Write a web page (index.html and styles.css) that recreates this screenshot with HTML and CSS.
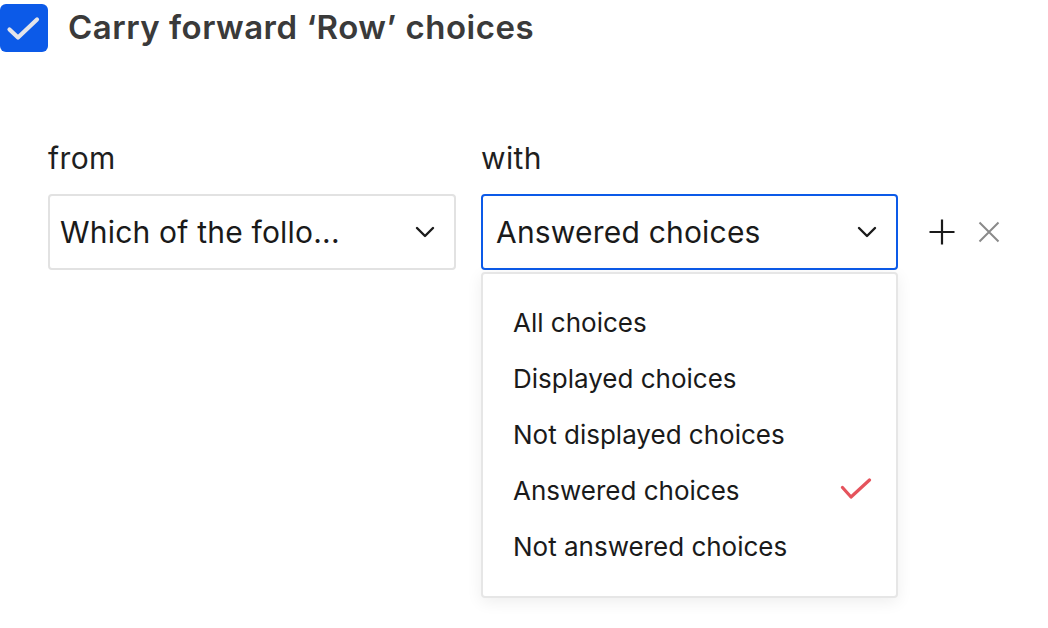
FILE: index.html
```html
<!DOCTYPE html>
<html>
<head>
<meta charset="utf-8">
<link rel="stylesheet" href="styles.css">
</head>
<body>
<div class="page">
  <div class="header">
    <span class="checkbox">
      <svg width="48" height="48" viewBox="0 0 48 48"><path d="M9.5 25.5 L18 33.5 L37 15.5" fill="none" stroke="#e4e4ea" stroke-width="4.2" stroke-linecap="round" stroke-linejoin="round"/></svg>
    </span>
    <span class="title">Carry forward ‘Row’ choices</span>
  </div>
  <div class="fields">
    <div class="col col-from">
      <div class="label">from</div>
      <div class="select">
        <span class="value">Which of the follo...</span>
        <svg class="chev" width="20" height="12" viewBox="0 0 20 12"><path d="M2 2 L10 10 L18 2" fill="none" stroke="#1a1a1a" stroke-width="2.4" stroke-linecap="round" stroke-linejoin="round"/></svg>
      </div>
    </div>
    <div class="col col-with">
      <div class="label">with</div>
      <div class="select active">
        <span class="value">Answered choices</span>
        <svg class="chev" width="20" height="12" viewBox="0 0 20 12"><path d="M2 2 L10 10 L18 2" fill="none" stroke="#1a1a1a" stroke-width="2.4" stroke-linecap="round" stroke-linejoin="round"/></svg>
      </div>
      <ul class="menu">
        <li>All choices</li>
        <li>Displayed choices</li>
        <li>Not displayed choices</li>
        <li class="selected">Answered choices
          <svg class="tick" width="32" height="24" viewBox="0 0 32 24"><path d="M2.5 9.5 L11 19 L29.5 2" fill="none" stroke="#e5535c" stroke-width="3.2" stroke-linecap="round" stroke-linejoin="round"/></svg>
        </li>
        <li>Not answered choices</li>
      </ul>
    </div>
    <div class="actions">
      <svg class="plus" width="28" height="28" viewBox="0 0 28 28"><path d="M14 1.5 V26.5 M1.5 14 H26.5" fill="none" stroke="#1a1a1a" stroke-width="2.2"/></svg>
      <svg class="close" width="22" height="22" viewBox="0 0 22 22"><path d="M1.5 1.5 L20.5 20.5 M20.5 1.5 L1.5 20.5" fill="none" stroke="#8a8a8a" stroke-width="2"/></svg>
    </div>
  </div>
</div>
</body>
</html>
```
FILE: styles.css
```css
html, body {
  margin: 0;
  padding: 0;
  background: #ffffff;
}
body {
  font-family: Inter, "Noto Sans", sans-serif;
  color: #1d1d1d;
}
.page {
  width: 1048px;
  height: 628px;
  position: relative;
}
.header {
  display: flex;
  align-items: center;
  gap: 20px;
  padding-top: 4px;
  height: 48px;
}
.checkbox {
  width: 48px;
  height: 48px;
  border-radius: 6px;
  background: #0c5ae8;
  display: flex;
}
.title {
  font-size: 33px;
  font-weight: 600;
  color: #3a3a3a;
  letter-spacing: 0.5px;
  line-height: 44px;
  margin-top: -2px;
}
.fields {
  display: flex;
  align-items: flex-start;
  margin-top: 88px;
  padding-left: 48px;
  gap: 25px;
}
.col {
  display: flex;
  flex-direction: column;
  position: relative;
}
.col-from { width: 408px; }
.col-with { width: 417px; }
.label {
  font-size: 30px;
  height: 54px;
  line-height: 36px;
  letter-spacing: 0.4px;
  color: #1f1f1f;
}
.select {
  box-sizing: border-box;
  height: 76px;
  border: 2px solid #e2e2e2;
  border-radius: 4px;
  display: flex;
  align-items: center;
  justify-content: space-between;
  padding: 0 19px 0 10px;
}
.select.active {
  border-color: #0c5ae8;
  padding-left: 13px;
}
.value {
  font-size: 30px;
  color: #1a1a1a;
  white-space: nowrap;
  letter-spacing: 0.2px;
}
.chev { flex: none; }
.menu {
  list-style: none;
  margin: 2px 0 0 0;
  padding: 20px 0 22px 0;
  box-sizing: border-box;
  width: 417px;
  border: 2px solid #e6e6e6;
  border-radius: 4px;
  box-shadow: 0 4px 16px rgba(0,0,0,0.07);
  background: #fff;
}
.menu li {
  height: 56px;
  display: flex;
  align-items: center;
  justify-content: space-between;
  padding: 0 24px 0 30px;
  font-size: 26px;
  letter-spacing: 0;
  color: #1a1a1a;
}
.actions {
  display: flex;
  align-items: center;
  gap: 22px;
  height: 76px;
  margin-top: 54px;
  padding-left: 5px;
}
```
